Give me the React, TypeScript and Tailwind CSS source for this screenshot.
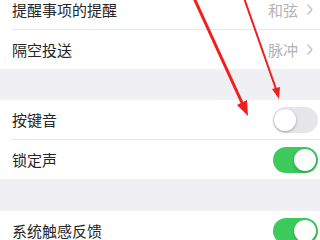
import React from 'react';

const font = { fontFamily: '"Noto Sans CJK SC", "Noto Sans", sans-serif' };

const Toggle: React.FC<{ on: boolean }> = ({ on }) => (
  <div
    className={`relative w-[45px] h-[26px] rounded-full ${
      on ? 'bg-[#3ccb5a]' : 'bg-[#e6e6e9]'
    }`}
  >
    <div
      className={`absolute top-[2px] w-[22px] h-[22px] rounded-full bg-white shadow-[0_1px_3px_rgba(0,0,0,0.3)] ${
        on ? 'right-[2px]' : 'left-[1px]'
      }`}
    />
  </div>
);

const Chevron = () => (
  <svg width="6" height="11" viewBox="0 0 6 11" className="ml-[9px] mr-[5px]">
    <path d="M1 1l4 4.5-4 4.5" fill="none" stroke="#c4c4c8" strokeWidth="1.5" strokeLinecap="round" strokeLinejoin="round" />
  </svg>
);

const Row: React.FC<{ label: string; value?: string; toggle?: boolean; divider?: boolean }> = ({
  label,
  value,
  toggle,
  divider,
}) => (
  <div className="relative h-[39px] flex items-center pl-[12px] pr-[2px] bg-white">
    <span className="text-[15px] text-[#262626] leading-none">{label}</span>
    <div className="ml-auto flex items-center">
      {value && <span className="text-[15px] text-[#b2b2b6] leading-none">{value}</span>}
      {value && <Chevron />}
      {toggle !== undefined && <Toggle on={toggle} />}
    </div>
    {divider && <div className="absolute left-[12px] right-0 bottom-[-1px] h-px bg-[#e8e8ec]" />}
  </div>
);

const App: React.FC = () => {
  return (
    <div className="relative w-[320px] h-[240px] overflow-hidden bg-[#efeff4]" style={font}>
      <div className="-mt-[10px] flex flex-col">
        <Row label="提醒事项的提醒" value="和弦" divider />
        <div className="h-px bg-white" />
        <Row label="隔空投送" value="脉冲" />
        <div className="h-[31px]" />
        <Row label="按键音" toggle={false} divider />
        <div className="h-px bg-white" />
        <Row label="锁定声" toggle={true} />
        <div className="h-[32px]" />
        <Row label="系统触感反馈" toggle={true} />
      </div>

      <svg className="absolute inset-0 pointer-events-none" width="320" height="240">
        <line x1="194" y1="-2" x2="243" y2="105" stroke="#f21d1d" strokeWidth="3" />
        <polygon points="248,116 237,105 247,100" fill="#f21d1d" />
        <line x1="244" y1="-2" x2="276" y2="89" stroke="#f21d1d" strokeWidth="2" />
        <polygon points="279,99 272,89 280,87" fill="#f21d1d" />
      </svg>
    </div>
  );
};

export default App;
